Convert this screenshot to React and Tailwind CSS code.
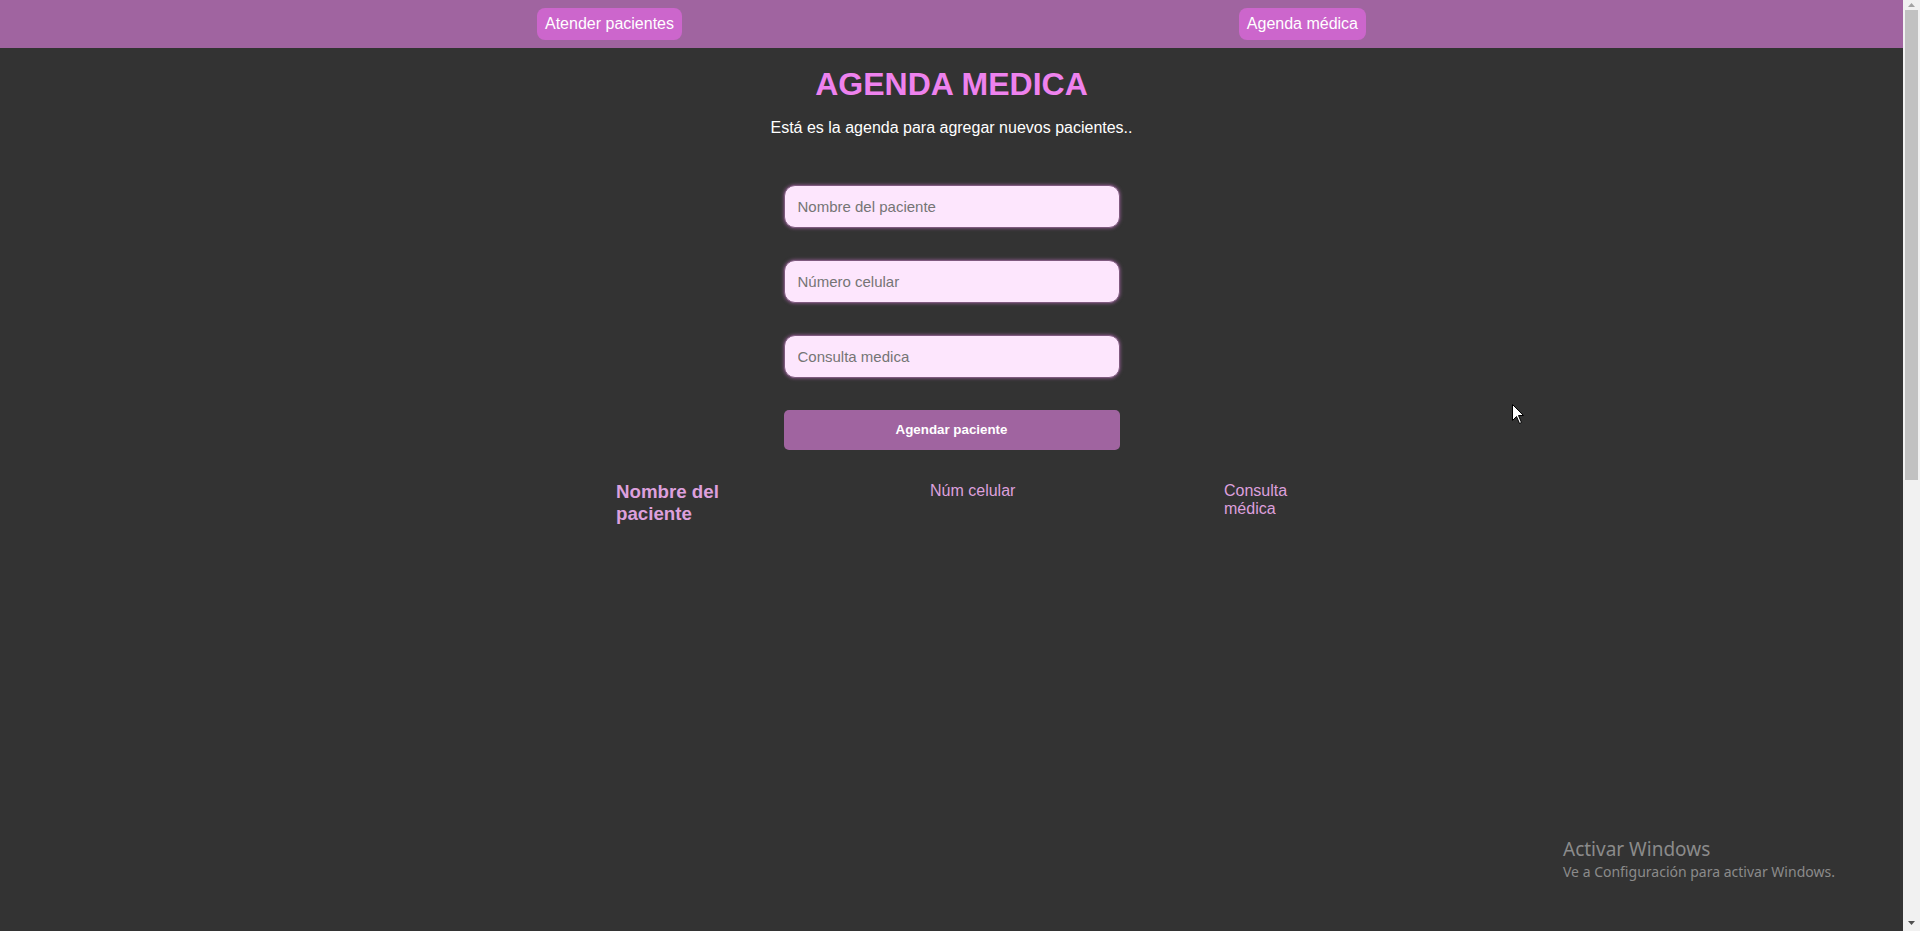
import React from 'react';

const NavButton = ({ children }) => (
  <button className="h-[32px] px-[8px] rounded-[8px] bg-[#cc66cc] text-white text-[16px] leading-none">
    {children}
  </button>
);

const Field = ({ placeholder }) => (
  <input
    type="text"
    placeholder={placeholder}
    className="w-[336px] h-[43px] px-[13px] rounded-[11px] bg-[#fde6fd] text-[15px] text-[#333] placeholder:text-[#757575] outline-none border border-[#7f5a7f] shadow-[0_0_3px_1px_#6e4d6e]"
  />
);

export default function App() {
  return (
    <div
      className="relative flex w-full h-[931px] overflow-hidden bg-[#333333]"
      style={{ fontFamily: '"Liberation Sans", Arial, sans-serif' }}
    >
      {/* Page */}
      <div className="flex-1 flex flex-col">
        {/* Nav */}
        <header className="h-[48px] bg-[#a064a0] flex items-center">
          <nav className="w-[829px] mx-auto flex justify-between">
            <NavButton>Atender pacientes</NavButton>
            <NavButton>Agenda médica</NavButton>
          </nav>
        </header>

        {/* Agenda */}
        <main className="flex flex-col items-center">
          <h1 className="mt-[18px] text-[32px] leading-[37px] font-bold text-[#ee82ee]">AGENDA MEDICA</h1>
          <p className="mt-[16px] text-[16px] leading-[18px] text-white">
            Está es la agenda para agregar nuevos pacientes..
          </p>

          <form className="mt-[48px] flex flex-col gap-[32px]" onSubmit={(e) => e.preventDefault()}>
            <Field placeholder="Nombre del paciente" />
            <Field placeholder="Número celular" />
            <Field placeholder="Consulta medica" />
            <button className="w-[336px] h-[40px] rounded-[5px] bg-[#a064a0] text-white text-[13.33px] font-bold">
              Agendar paciente
            </button>
          </form>

          <div className="mt-[31px] w-[671px] grid grid-cols-[314px_294px_63px] items-start text-[#dda0dd]">
            <div className="w-[120px] text-[18.72px] leading-[21.5px] font-bold">Nombre del paciente</div>
            <div className="text-[16px] leading-[18px] pt-[1px]">Núm celular</div>
            <div className="text-[16px] leading-[18px] pt-[1px]">Consulta médica</div>
          </div>
        </main>
      </div>

      {/* Scrollbar */}
      <div className="w-[17px] h-full bg-[#f1f1f1] flex flex-col items-center">
        <div className="h-[10px] w-full flex items-center justify-center">
          <svg width="7" height="4" viewBox="0 0 7 4"><path d="M3.5 0L7 4H0z" fill="#a3a3a3" /></svg>
        </div>
        <div className="w-[13px] h-[470px] bg-[#c1c1c1]" />
        <div className="flex-1" />
        <div className="h-[17px] w-full flex items-center justify-center">
          <svg width="7" height="4" viewBox="0 0 7 4"><path d="M0 0H7L3.5 4z" fill="#505050" /></svg>
        </div>
      </div>

      {/* Windows watermark */}
      <div
        className="absolute left-[1563px] top-[836px] text-[#8b8b8b] pointer-events-none"
        style={{ fontFamily: '"Noto Sans", "Open Sans", sans-serif' }}
      >
        <div className="text-[19px] leading-[26px]">Activar Windows</div>
        <div className="text-[14px] leading-[20px]">Ve a Configuración para activar Windows.</div>
      </div>

      {/* Cursor */}
      <svg className="absolute left-[1512px] top-[404px]" width="13" height="21" viewBox="0 0 13 21">
        <path d="M0.5 0.5V16.5L4.5 12.5L7.5 19.5L9.5 18.5L6.5 11.5H11.5Z" fill="#fff" stroke="#000" strokeWidth="1" />
      </svg>
    </div>
  );
}
